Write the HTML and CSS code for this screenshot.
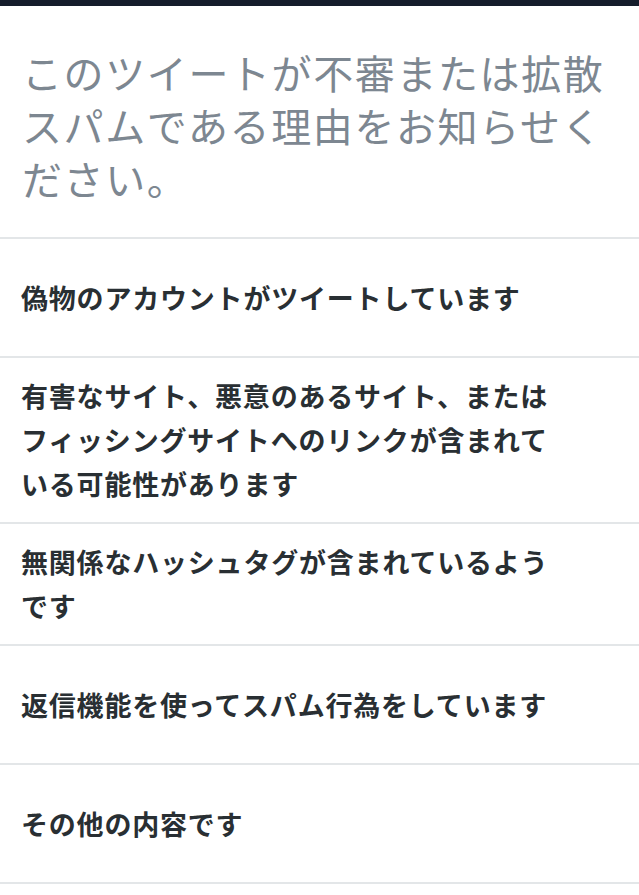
FILE: index.html
```html
<!DOCTYPE html>
<html lang="ja">
<head>
<meta charset="utf-8">
<link rel="stylesheet" href="styles.css">
</head>
<body>
<div class="topbar"></div>
<main class="sheet">
  <h1 class="title">このツイートが不審または拡散スパムである理由をお知らせください。</h1>
  <ul class="options">
    <li class="option"><span class="label">偽物のアカウントがツイートしています</span></li>
    <li class="option"><span class="label">有害なサイト、悪意のあるサイト、またはフィッシングサイトへのリンクが含まれている可能性があります</span></li>
    <li class="option"><span class="label">無関係なハッシュタグが含まれているようです</span></li>
    <li class="option"><span class="label">返信機能を使ってスパム行為をしています</span></li>
    <li class="option"><span class="label">その他の内容です</span></li>
  </ul>
</main>
</body>
</html>
```
FILE: styles.css
```css
html, body {
  margin: 0;
  padding: 0;
  background: #ffffff;
}
body {
  font-family: "Noto Sans CJK JP", "Noto Sans", sans-serif;
}
.topbar {
  height: 6px;
  background: #151d2b;
}
.sheet {
  display: flex;
  flex-direction: column;
}
.title {
  margin: 0;
  padding: 40px 22px 32px 22px;
  font-size: 40px;
  line-height: 53px;
  font-weight: 400;
  letter-spacing: 1.6px;
  color: #7d8791;
  border-bottom: 2px solid #e3e6e8;
}
.options {
  list-style: none;
  margin: 0;
  padding: 0;
}
.option {
  box-sizing: border-box;
  min-height: 119px;
  display: flex;
  align-items: center;
  padding: 16px 70px 16px 21px;
  border-bottom: 2px solid #e3e6e8;
}
.label {
  max-width: 545px;
  font-size: 27px;
  line-height: 44px;
  font-weight: 700;
  letter-spacing: 0.8px;
  color: #292f33;
}
```
